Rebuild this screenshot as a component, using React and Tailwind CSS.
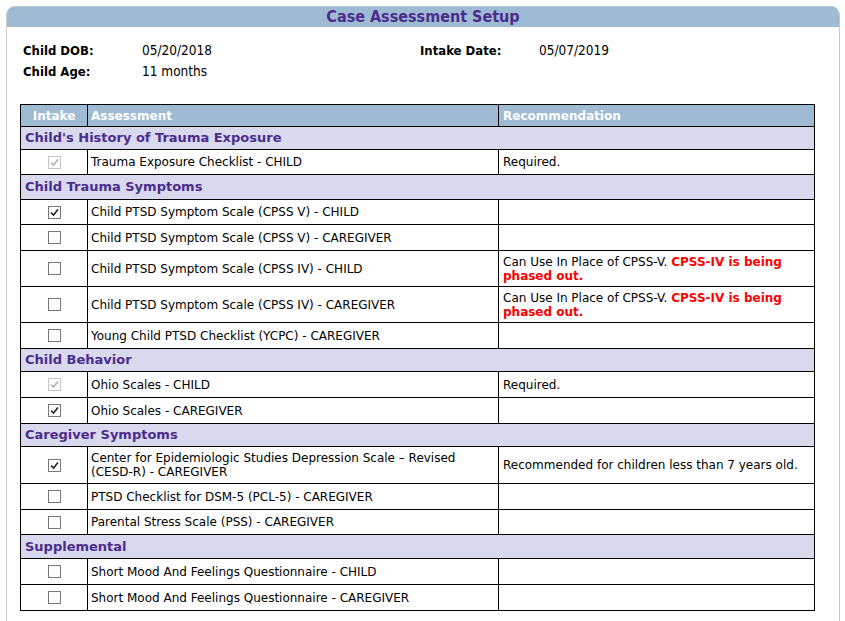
import React from "react";

const Box = ({ state }) => {
  const border = state === "disabled" ? "border-[#c4c4c4]" : "border-[#777]";
  return (
    <span className={`inline-flex items-center justify-center w-[13px] h-[13px] border ${border} bg-white align-middle`}>
      {state !== "none" && (
        <svg width="9" height="9" viewBox="0 0 9 9">
          <path d="M1 4.5 L3.5 7 L8 1.5" fill="none" stroke={state === "disabled" ? "#b0b0b0" : "#222"} strokeWidth="1.6" />
        </svg>
      )}
    </span>
  );
};

const Section = ({ title, h }) => (
  <tr className={`${h} bg-[#d9d9ee]`}>
    <td colSpan={3} className="border border-black px-[4px] font-bold text-[#4b2c8c] text-[13px] align-middle">{title}</td>
  </tr>
);

const Row = ({ box, name, rec, h }) => (
  <tr className={`${h} bg-white`}>
    <td className="border border-black text-center align-middle leading-none"><Box state={box} /></td>
    <td className="border border-black px-[3px] align-middle leading-[14px]">{name}</td>
    <td className="border border-black px-[4px] align-middle leading-[14px]">{rec}</td>
  </tr>
);

const Phase = () => (
  <>
    Can Use In Place of CPSS-V. <span className="font-bold text-[#ff0000]">CPSS-IV is being phased out.</span>
  </>
);

export default function App() {
  return (
    <div className="w-[845px] h-[621px] bg-white overflow-hidden pt-[6px] pl-[6px]" style={{ fontFamily: '"DejaVu Sans", Verdana, sans-serif' }}>
      <div className="w-[834px] h-[640px] border-x border-[#c8c8c8] rounded-t-[9px]">
        <div className="h-[21px] bg-[#9ebbd3] rounded-t-[8px] border-t border-[#b8c8d6] flex items-center justify-center">
          <span className="text-[16px] font-bold text-[#4b2c8c]" style={{ fontFamily: '"DejaVu Sans Condensed", "Liberation Sans Narrow", sans-serif' }}>Case Assessment Setup</span>
        </div>
        <div className="pl-[16px] pt-[13px] text-black" style={{ fontFamily: '"DejaVu Sans Condensed", "Liberation Sans", sans-serif' }}>
          <div className="flex h-[21px] items-center">
            <span className="w-[119px] font-bold text-[13px]">Child DOB:</span>
            <span className="w-[278px] text-[13.5px]">05/20/2018</span>
            <span className="w-[119px] font-bold text-[13px]">Intake Date:</span>
            <span className="text-[13.5px]">05/07/2019</span>
          </div>
          <div className="flex h-[21px] items-center">
            <span className="w-[119px] font-bold text-[13px]">Child Age:</span>
            <span className="text-[13.5px]">11 months</span>
          </div>
        </div>
        <div className="pl-[13px] pt-[22px]">
          <table className="border-collapse border border-black w-[794px] text-[12px] text-black table-fixed">
            <colgroup>
              <col className="w-[67px]" />
              <col className="w-[411px]" />
              <col className="w-[316px]" />
            </colgroup>
            <thead>
              <tr className="h-[22px] bg-[#9ebbd3] text-white font-bold text-[12px]">
                <th className="border border-black text-center font-bold">Intake</th>
                <th className="border border-black text-left px-[3px] font-bold">Assessment</th>
                <th className="border border-black text-left px-[4px] font-bold">Recommendation</th>
              </tr>
            </thead>
            <tbody>
              <Section title="Child's History of Trauma Exposure" h="h-[23px]" />
              <Row h="h-[25px]" box="disabled" name="Trauma Exposure Checklist - CHILD" rec="Required." />
              <Section title="Child Trauma Symptoms" h="h-[25px]" />
              <Row h="h-[25px]" box="checked" name="Child PTSD Symptom Scale (CPSS V) - CHILD" rec="" />
              <Row h="h-[26px]" box="none" name="Child PTSD Symptom Scale (CPSS V) - CAREGIVER" rec="" />
              <Row h="h-[36px]" box="none" name="Child PTSD Symptom Scale (CPSS IV) - CHILD" rec={<Phase />} />
              <Row h="h-[36px]" box="none" name="Child PTSD Symptom Scale (CPSS IV) - CAREGIVER" rec={<Phase />} />
              <Row h="h-[26px]" box="none" name="Young Child PTSD Checklist (YCPC) - CAREGIVER" rec="" />
              <Section title="Child Behavior" h="h-[23px]" />
              <Row h="h-[26px]" box="disabled" name="Ohio Scales - CHILD" rec="Required." />
              <Row h="h-[26px]" box="checked" name="Ohio Scales - CAREGIVER" rec="" />
              <Section title="Caregiver Symptoms" h="h-[23px]" />
              <Row h="h-[37px]" box="checked" name={<>Center for Epidemiologic Studies Depression Scale – Revised<br />(CESD-R) - CAREGIVER</>} rec="Recommended for children less than 7 years old." />
              <Row h="h-[26px]" box="none" name="PTSD Checklist for DSM-5 (PCL-5) - CAREGIVER" rec="" />
              <Row h="h-[25px]" box="none" name="Parental Stress Scale (PSS) - CAREGIVER" rec="" />
              <Section title="Supplemental" h="h-[24px]" />
              <Row h="h-[26px]" box="none" name="Short Mood And Feelings Questionnaire - CHILD" rec="" />
              <Row h="h-[26px]" box="none" name="Short Mood And Feelings Questionnaire - CAREGIVER" rec="" />
            </tbody>
          </table>
        </div>
      </div>
    </div>
  );
}
